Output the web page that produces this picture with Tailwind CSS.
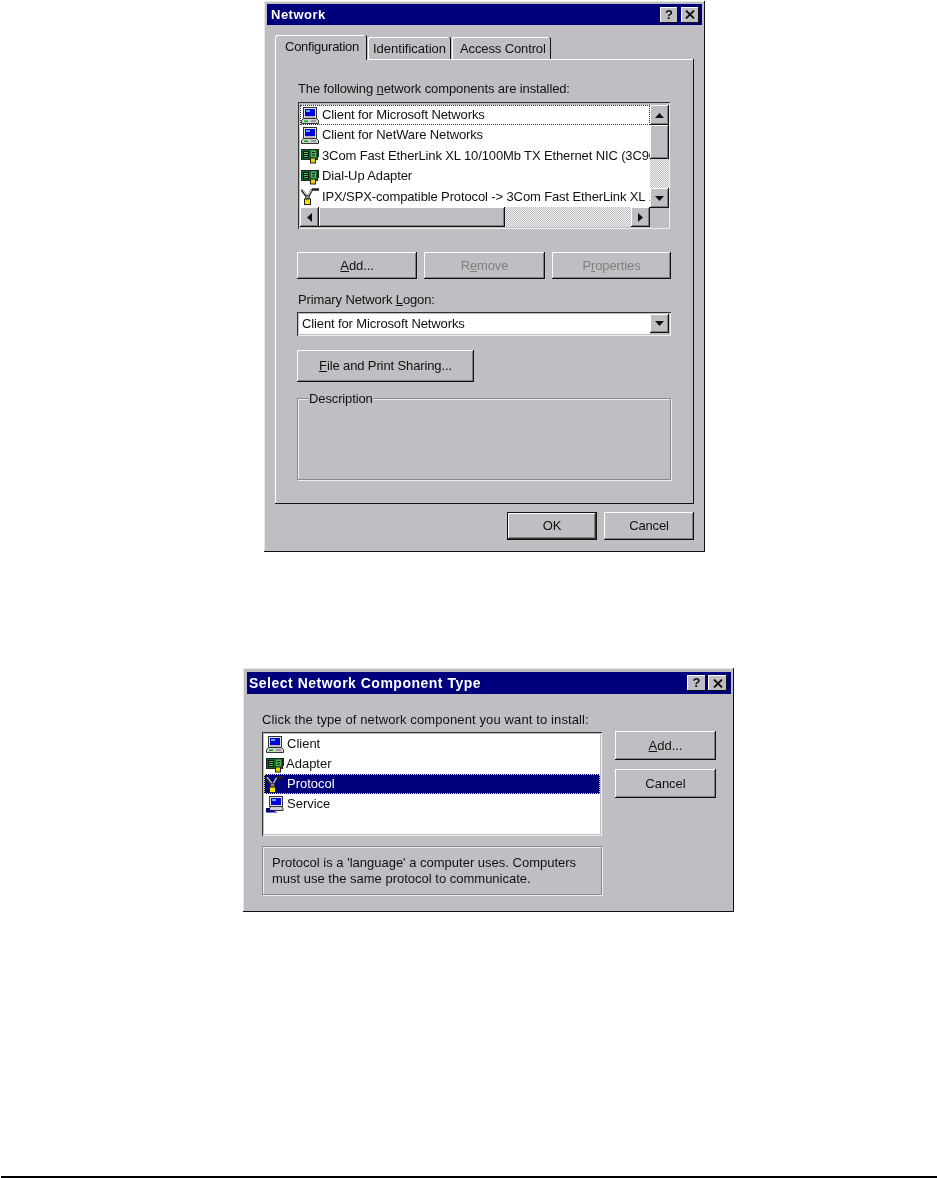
<!DOCTYPE html>
<html lang="en">
<head>
  <meta charset="UTF-8" />
  <title>Network</title>
  <script src="https://cdn.jsdelivr.net/npm/@tailwindcss/browser@4"></script>
</head>
<body class="bg-white w-[937px] h-[1178px] overflow-hidden flex flex-col font-['Liberation_Sans',Arial,sans-serif] text-[13px] leading-4 text-[#111]">

<!-- icon symbols -->
<svg class="hidden">
  <symbol id="pc" viewBox="0 0 18 17">
    <rect x="2.500" y="0.500" width="13" height="11" fill="#e0e0e0" stroke="#333" />
    <rect x="4" y="2" width="10" height="7" fill="#0000d8" />
    <rect x="5" y="3" width="4" height="2" fill="#50b0ff" />
    <rect x="4" y="9.500" width="10" height="1" fill="#909090" />
    <path d="M0.500 16.500V13.500L2.500 11.500H15.500L17.500 13.500V16.500Z" fill="#d0d0d0" stroke="#333" />
    <rect x="3" y="13.500" width="4" height="1.500" fill="#00b000" />
    <rect x="10" y="13.500" width="5" height="1" fill="#666" />
  </symbol>
  <symbol id="nic" viewBox="0 0 18 17">
    <rect x="0.500" y="2.500" width="16" height="10" fill="#0a6a30" stroke="#222" />
    <rect x="2" y="4" width="6" height="7" fill="#111" />
    <path d="M3 5.500H7M3 7.500H7M3 9.500H7" stroke="#50c050" />
    <rect x="10" y="3.500" width="5" height="7" fill="#50b050" />
    <path d="M11 5.500H14M11 8H14" stroke="#111" />
    <path d="M16 2H18V10H16Z" fill="#222" />
    <rect x="9.500" y="11" width="5" height="5" fill="#e8d000" stroke="#222" />
  </symbol>
  <symbol id="proto" viewBox="0 0 18 17">
    <path d="M0.500 1.500L5.500 8M11 1.500L7.500 8M11 1.500H18" fill="none" stroke="#222" stroke-width="2.600" />
    <path d="M1 1L6 7.500M10.500 2L7 7.500" fill="none" stroke="#e0e0e0" stroke-width="1.200" />
    <rect x="4.500" y="7.500" width="4" height="3.500" fill="#888" stroke="#222" stroke-width=".6" />
    <rect x="3.500" y="11" width="6" height="5.500" fill="#f0e000" stroke="#222" />
  </symbol>
  <symbol id="service" viewBox="0 0 18 17">
    <rect x="3.500" y="0.500" width="13" height="10" fill="#e0e0e0" stroke="#333" />
    <rect x="5" y="2" width="10" height="7" fill="#0000d8" />
    <rect x="6" y="3" width="4" height="2" fill="#50b0ff" />
    <path d="M3.500 14.500V12.500L5 10.500H15.500L17 12.500V14.500Z" fill="#d0d0d0" stroke="#333" />
    <path d="M0 14H6L12 16.500H3Z" fill="#0000a0" />
    <rect x="0" y="12" width="4" height="4.500" fill="#000080" />
  </symbol>
</svg>

<!-- Network dialog -->
<div class="ml-[264px] mt-px w-[441px] h-[551px] shrink-0 bg-[#bfbec2] p-[3px] tracking-[-0.12px] blur-[0.3px] shadow-[inset_-1px_-1px_0_#111,inset_1px_1px_0_#e8e8e8]">
  <div class="h-[21px] bg-[#00007c] flex items-center pl-[4px] pr-[3px]">
    <span class="font-bold text-white tracking-[0.5px]">Network</span>
    <div class="ml-auto flex">
      <div class="w-[18px] h-[16px] bg-[#bfbec2] flex items-center justify-center font-bold text-[13px] shadow-[inset_-1px_-1px_0_#111,inset_1px_1px_0_#fff]">?</div>
      <div class="ml-[3px] w-[18px] h-[16px] bg-[#bfbec2] flex items-center justify-center shadow-[inset_-1px_-1px_0_#111,inset_1px_1px_0_#fff]">
        <svg width="10" height="9" viewBox="0 0 10 9"><path d="M1 0.500L9 8.500M9 0.500L1 8.500" stroke="#111" stroke-width="1.800" /></svg>
      </div>
    </div>
  </div>

  <div class="ml-[8px] mt-[10px] h-[25px] flex items-end relative z-10">
    <div class="h-[25px] w-[92px] pl-[10px] pt-[4px] tracking-[-0.25px] bg-[#bfbec2] rounded-t-[2px] shadow-[inset_-1px_0_0_#111,inset_1px_1px_0_#fff]">Configuration</div>
    <div class="h-[22px] w-[83px] ml-px mb-px pl-[5px] pt-[4px] tracking-normal rounded-t-[2px] shadow-[inset_-1px_0_0_#111,inset_1px_1px_0_#fff]">Identification</div>
    <div class="h-[22px] w-[99px] ml-px mb-px pl-[8px] pt-[4px] rounded-t-[2px] shadow-[inset_-1px_0_0_#111,inset_1px_1px_0_#fff]">Access Control</div>
  </div>

  <div class="ml-[8px] -mt-px w-[419px] h-[445px] pt-[22px] pl-[23px] shadow-[inset_-1px_-1px_0_#111,inset_1px_1px_0_#fff]">
    <div class="h-4">The following <u>n</u>etwork components are installed:</div>

    <!-- component list -->
    <div class="mt-[5px] w-[372px] h-[127px] pt-[3px] pl-[2px] flex shadow-[inset_1px_1px_0_#333,inset_-1px_-1px_0_#eee]">
      <div class="w-[350px]">
        <div class="h-[102px] bg-white overflow-hidden whitespace-nowrap">
          <div class="h-[20px] flex items-center gap-[3px] border border-dotted border-[#333]"><svg class="w-[18px] h-[17px] shrink-0"><use href="#pc" /></svg>Client for Microsoft Networks</div>
          <div class="h-[20px] flex items-center gap-[3px] pl-px"><svg class="w-[18px] h-[17px] shrink-0"><use href="#pc" /></svg>Client for NetWare Networks</div>
          <div class="h-[21px] flex items-center gap-[3px] pl-px"><svg class="w-[18px] h-[17px] shrink-0"><use href="#nic" /></svg>3Com Fast EtherLink XL 10/100Mb TX Ethernet NIC (3C905)</div>
          <div class="h-[20px] flex items-center gap-[3px] pl-px"><svg class="w-[18px] h-[17px] shrink-0"><use href="#nic" /></svg>Dial-Up Adapter</div>
          <div class="h-[21px] flex items-center gap-[3px] pl-px"><svg class="w-[18px] h-[17px] shrink-0"><use href="#proto" /></svg>IPX/SPX-compatible Protocol -&gt; 3Com Fast EtherLink XL 10/100Mb</div>
        </div>
        <div class="h-[20px] flex">
          <div class="w-[19px] flex items-center justify-center bg-[#bfbec2] shadow-[inset_-1px_-1px_0_#111,inset_1px_1px_0_#fff,inset_-2px_-2px_0_#808080]"><svg width="5" height="9" viewBox="0 0 5 9"><path d="M5 0V9L0 4.500Z" fill="#111" /></svg></div>
          <div class="w-[186px] bg-[#bfbec2] shadow-[inset_-1px_-1px_0_#111,inset_1px_1px_0_#fff,inset_-2px_-2px_0_#808080]"></div>
          <div class="w-[126px] bg-[repeating-conic-gradient(#f2f2f2_0_25%,#bfbec2_0_50%)] bg-size-[2px_2px]"></div>
          <div class="w-[19px] flex items-center justify-center bg-[#bfbec2] shadow-[inset_-1px_-1px_0_#111,inset_1px_1px_0_#fff,inset_-2px_-2px_0_#808080]"><svg width="5" height="9" viewBox="0 0 5 9"><path d="M0 0V9L5 4.500Z" fill="#111" /></svg></div>
        </div>
      </div>
      <div class="w-[19px] h-[103px] flex flex-col">
        <div class="h-[20px] flex items-center justify-center bg-[#bfbec2] shadow-[inset_-1px_-1px_0_#111,inset_1px_1px_0_#fff,inset_-2px_-2px_0_#808080]"><svg width="9" height="5" viewBox="0 0 9 5"><path d="M0 5H9L4.500 0Z" fill="#111" /></svg></div>
        <div class="h-[34px] bg-[#bfbec2] shadow-[inset_-1px_-1px_0_#111,inset_1px_1px_0_#fff,inset_-2px_-2px_0_#808080]"></div>
        <div class="h-[29px] bg-[repeating-conic-gradient(#f2f2f2_0_25%,#bfbec2_0_50%)] bg-size-[2px_2px]"></div>
        <div class="h-[20px] flex items-center justify-center bg-[#bfbec2] shadow-[inset_-1px_-1px_0_#111,inset_1px_1px_0_#fff,inset_-2px_-2px_0_#808080]"><svg width="9" height="5" viewBox="0 0 9 5"><path d="M0 0H9L4.500 5Z" fill="#111" /></svg></div>
      </div>
    </div>

    <div class="mt-[23px] -ml-px flex h-[27px]">
      <div class="w-[120px] flex items-center justify-center shadow-[inset_-1px_-1px_0_#111,inset_1px_1px_0_#fff,inset_-2px_-2px_0_#808080]"><span><u>A</u>dd...</span></div>
      <div class="ml-[7px] w-[121px] flex items-center justify-center text-[#808080] shadow-[inset_-1px_-1px_0_#111,inset_1px_1px_0_#fff,inset_-2px_-2px_0_#808080]"><span>R<u>e</u>move</span></div>
      <div class="ml-[7px] w-[119px] flex items-center justify-center text-[#808080] shadow-[inset_-1px_-1px_0_#111,inset_1px_1px_0_#fff,inset_-2px_-2px_0_#808080]"><span>P<u>r</u>operties</span></div>
    </div>

    <div class="mt-[13px] h-4">Primary Network <u>L</u>ogon:</div>

    <div class="mt-[4px] -ml-px w-[374px] h-[24px] pt-[2px] pl-[2px] flex shadow-[inset_1px_1px_0_#333,inset_-1px_-1px_0_#eee]">
      <div class="w-[351px] h-[20px] bg-white flex items-center pl-[3px]">Client for Microsoft Networks</div>
      <div class="w-[19px] h-[19px] flex items-center justify-center bg-[#bfbec2] shadow-[inset_-1px_-1px_0_#111,inset_1px_1px_0_#fff,inset_-2px_-2px_0_#808080]"><svg width="9" height="5" viewBox="0 0 9 5"><path d="M0 0H9L4.500 5Z" fill="#111" /></svg></div>
    </div>

    <div class="mt-[14px] -ml-px w-[177px] h-[32px] flex items-center justify-center shadow-[inset_-1px_-1px_0_#111,inset_1px_1px_0_#fff,inset_-2px_-2px_0_#808080]"><span><u>F</u>ile and Print Sharing...</span></div>

    <div class="mt-[16px] -ml-px w-[374px] h-[82px] relative border border-[#8a8a8a] shadow-[inset_1px_1px_0_#eee,1px_1px_0_#eee]">
      <span class="absolute left-[10px] -top-[8px] px-px bg-[#bfbec2]">Description</span>
    </div>
  </div>

  <div class="mt-[8px] ml-[240px] flex h-[28px]">
    <div class="w-[90px] flex items-center justify-center border border-[#111] shadow-[inset_-1px_-1px_0_#333,inset_1px_1px_0_#fff,inset_-2px_-2px_0_#808080]">OK</div>
    <div class="ml-[7px] w-[90px] flex items-center justify-center shadow-[inset_-1px_-1px_0_#111,inset_1px_1px_0_#fff,inset_-2px_-2px_0_#808080]">Cancel</div>
  </div>
</div>

<!-- Select Network Component Type dialog -->
<div class="ml-[243px] mt-[116px] w-[491px] h-[244px] shrink-0 bg-[#bfbec2] pt-[4px] pl-[4px] pr-[3px] blur-[0.3px] shadow-[inset_-1px_-1px_0_#111,inset_1px_1px_0_#e8e8e8]">
  <div class="h-[22px] bg-[#00007c] flex items-center pl-[2px] pr-[4px]">
    <span class="font-bold text-[14px] text-white tracking-[0.5px]">Select Network Component Type</span>
    <div class="ml-auto flex">
      <div class="w-[19px] h-[16px] bg-[#bfbec2] flex items-center justify-center font-bold shadow-[inset_-1px_-1px_0_#111,inset_1px_1px_0_#fff]">?</div>
      <div class="ml-[2px] w-[19px] h-[16px] bg-[#bfbec2] flex items-center justify-center shadow-[inset_-1px_-1px_0_#111,inset_1px_1px_0_#fff]">
        <svg width="10" height="9" viewBox="0 0 10 9"><path d="M1 0.500L9 8.500M9 0.500L1 8.500" stroke="#111" stroke-width="1.800" /></svg>
      </div>
    </div>
  </div>

  <div class="mt-[18px] ml-[15px] flex">
    <div class="w-[340px]">
      <div class="h-4 tracking-[0.12px] whitespace-nowrap">Click the type of network component you want to install:</div>
      <div class="mt-[4px] h-[104px] p-[2px] shadow-[inset_1px_1px_0_#333,inset_-1px_-1px_0_#eee]">
        <div class="h-[100px] bg-white">
          <div class="h-[20px] flex items-center gap-[3px]"><svg class="w-[18px] h-[17px] shrink-0 ml-[2px]"><use href="#pc" /></svg>Client</div>
          <div class="h-[20px] flex items-center gap-[2px]"><svg class="w-[18px] h-[17px] shrink-0 ml-[2px]"><use href="#nic" /></svg>Adapter</div>
          <div class="h-[20px] flex items-center gap-[3px] bg-[#00007c] text-white border border-dotted border-[#e8e070]"><svg class="w-[18px] h-[17px] shrink-0 ml-px"><use href="#proto" /></svg>Protocol</div>
          <div class="h-[20px] flex items-center gap-[3px]"><svg class="w-[18px] h-[17px] shrink-0 ml-[2px]"><use href="#service" /></svg>Service</div>
        </div>
      </div>
      <div class="mt-[10px] h-[49px] pl-[9px] pt-[8px] border border-[#8a8a8a] shadow-[inset_1px_1px_0_#eee,1px_1px_0_#eee]">Protocol is a 'language' a computer uses. Computers<br />must use the same protocol to communicate.</div>
    </div>
    <div class="ml-[13px] w-[101px] pt-[19px]">
      <div class="h-[29px] flex items-center justify-center shadow-[inset_-1px_-1px_0_#111,inset_1px_1px_0_#fff,inset_-2px_-2px_0_#808080]"><span><u>A</u>dd...</span></div>
      <div class="mt-[9px] h-[29px] flex items-center justify-center shadow-[inset_-1px_-1px_0_#111,inset_1px_1px_0_#fff,inset_-2px_-2px_0_#808080]">Cancel</div>
    </div>
  </div>
</div>

<!-- page rule -->
<div class="mt-auto ml-px h-[2px] bg-black"></div>

</body>
</html>
